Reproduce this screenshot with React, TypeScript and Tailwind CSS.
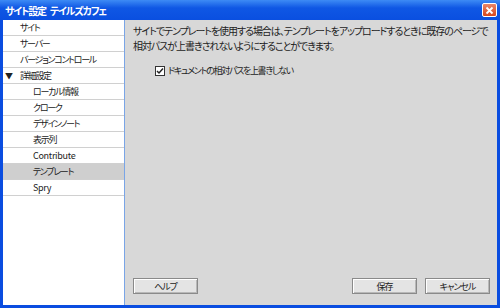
import React from "react";

const font = {
  fontFamily: '"Noto Sans CJK JP", "Noto Sans", sans-serif',
  fontFeatureSettings: '"palt"',
};

const items: { label: string; level: number; selected?: boolean; expander?: boolean; latin?: boolean }[] = [
  { label: "サイト", level: 0 },
  { label: "サーバー", level: 0 },
  { label: "バージョンコントロール", level: 0 },
  { label: "詳細設定", level: 0, expander: true },
  { label: "ローカル情報", level: 1 },
  { label: "クローク", level: 1 },
  { label: "デザインノート", level: 1 },
  { label: "表示列", level: 1 },
  { label: "Contribute", level: 1, latin: true },
  { label: "テンプレート", level: 1, selected: true },
  { label: "Spry", level: 1, latin: true },
];

function Btn({ label }: { label: string }) {
  return (
    <button className="w-[65px] h-[16px] border border-[#8a8a8a] bg-[#e4e4e4] shadow-[inset_1px_1px_0_#fff,inset_-1px_-1px_0_#b8b8b8] text-[9px] tracking-[-1px] leading-none text-[#222] flex items-center justify-center">
      {label}
    </button>
  );
}

export default function App() {
  return (
    <div className="w-[500px] h-[308px] flex flex-col bg-[#0a4de0] text-[#222]" style={font}>
      <div className="h-[20px] flex items-center justify-between pl-[5px] pr-[3px] bg-[linear-gradient(#3d8bf5,#0f57e4_40%,#0a4fe0)]">
        <span className="text-white text-[10px] font-bold tracking-[-1.2px]">
          サイト設定<span className="inline-block w-[4px]" />テイルズカフェ
        </span>
        <div className="w-[15px] h-[14px] rounded-[2px] border border-white bg-[linear-gradient(#e8866a,#d8471c)] flex items-center justify-center">
          <svg width="9" height="9" viewBox="0 0 9 9">
            <path d="M1.5 1.5 L7.5 7.5 M7.5 1.5 L1.5 7.5" stroke="white" strokeWidth="1.8" />
          </svg>
        </div>
      </div>
      <div className="flex-1 flex mx-[3px] mb-[3px] min-h-0">
        <div className="w-[122px] shrink-0 bg-white border-r border-[#7aa5e6] flex flex-col">
          {items.map((it) => (
            <div
              key={it.label}
              className={`h-[16px] border-b border-[#d0d0d0] flex items-center text-[9px] leading-none whitespace-nowrap ${it.selected ? "bg-[#cfcfcf]" : ""}`}
            >
              <span className="w-[17px] pl-[2px] text-[8px]">{it.expander ? "▼" : ""}</span>
              <span className={`${it.level === 1 ? "pl-[13px]" : ""} ${it.latin ? "tracking-[-0.3px]" : "tracking-[-1.3px]"}`}>
                {it.label}
              </span>
            </div>
          ))}
        </div>
        <div className="flex-1 min-w-0 bg-[#d8d8d8] flex flex-col pl-[8px] pr-[7px] pt-[3px] pb-[11px]">
          <p className="text-[10px] leading-[15px] tracking-[-1.05px] whitespace-nowrap">
            サイトでテンプレートを使用する場合は、テンプレートをアップロードするときに既存のページで
            <br />
            相対パスが上書きされないようにすることができます。
          </p>
          <label className="flex items-center gap-[3px] mt-[11px] ml-[22px] text-[9px] tracking-[-1.3px] whitespace-nowrap">
            <span className="w-[10px] h-[10px] border border-[#333] bg-white flex items-center justify-center">
              <svg width="8" height="8" viewBox="0 0 8 8">
                <path d="M1 4 L3 6 L7 1.5" stroke="#222" strokeWidth="1.5" fill="none" />
              </svg>
            </span>
            ドキュメントの相対パスを上書きしない
          </label>
          <div className="mt-auto flex items-center">
            <Btn label="ヘルプ" />
            <div className="flex-1" />
            <Btn label="保存" />
            <div className="w-[8px]" />
            <Btn label="キャンセル" />
          </div>
        </div>
      </div>
    </div>
  );
}
